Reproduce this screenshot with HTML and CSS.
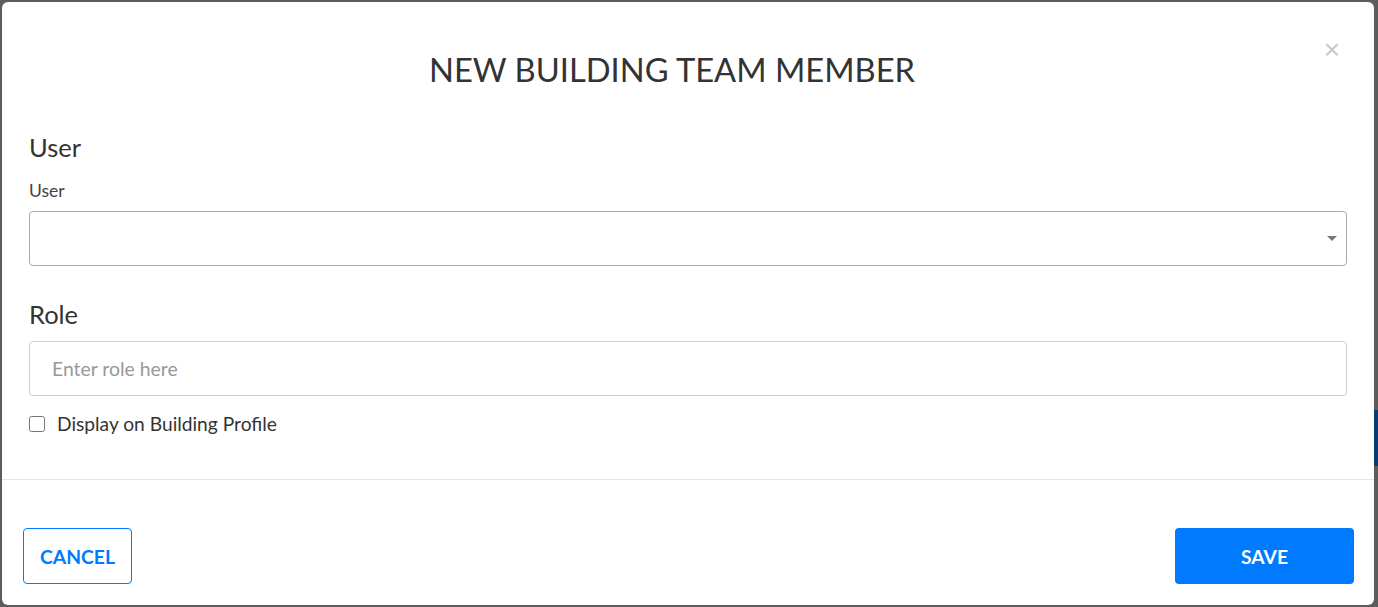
FILE: index.html
```html
<!DOCTYPE html>
<html lang="en">
  <head>
    <meta charset="UTF-8" />
    <meta name="viewport" content="width=device-width, initial-scale=1.0" />
    <title>New Building Team Member</title>
    <link rel="stylesheet" href="styles.css">
  </head>
  <body>
    <div class="backdrop">
      <div class="modal">
        <div class="modal-header">
          <h1 class="modal-title">NEW BUILDING TEAM MEMBER</h1>
          <button class="close" type="button" aria-label="Close">&times;</button>
        </div>

        <form class="modal-body">
          <h2 class="section-title">User</h2>
          <label class="field-label" for="user">User</label>
          <div class="select-wrap">
            <select id="user" name="user"></select>
            <span class="caret"></span>
          </div>

          <h2 class="section-title role-title">Role</h2>
          <input class="text-input" type="text" id="role" name="role" placeholder="Enter role here" />

          <label class="check-row">
            <input type="checkbox" id="displayProfile" name="displayProfile" />
            <span>Display on Building Profile</span>
          </label>
        </form>

        <div class="modal-footer">
          <button type="button" class="btn btn-outline">CANCEL</button>
          <button type="button" class="btn btn-primary">SAVE</button>
        </div>
      </div>
      <div class="side-strip"></div>
    </div>
  </body>
</html>
```

FILE: styles.css
```css
html,
body {
  margin: 0;
  height: 100%;
}

body {
  background-color: #5c5c5c;
  font-family: Lato, "Open Sans", Arial, sans-serif;
  color: #333;
}

.backdrop {
  display: flex;
  padding: 2px 0 0 2px;
  box-sizing: border-box;
  height: 100%;
}

.modal {
  width: 1372px;
  height: 603px;
  background-color: #fff;
  border-radius: 6px;
  display: flex;
  flex-direction: column;
  flex-shrink: 0;
}

.side-strip {
  width: 4px;
  height: 56px;
  margin-top: 408px;
  background-color: #0b3b74;
}

.modal-header {
  position: relative;
  padding: 48px 32px 0 0;
  text-align: center;
}

.modal-title {
  margin: 0;
  font-size: 32.7px;
  font-weight: 400;
  line-height: 1.2;
  color: #333;
}

.close {
  position: absolute;
  top: 34px;
  right: 34px;
  border: none;
  background: transparent;
  color: #c8c8c8;
  font-family: Arial, sans-serif;
  font-size: 28px;
  line-height: 1;
  padding: 0;
  cursor: pointer;
}

.modal-body {
  padding: 0 27px;
  display: flex;
  flex-direction: column;
  border-bottom: 1px solid #e5e5e5;
  padding-bottom: 44px;
}

.section-title {
  margin: 43px 0 0;
  font-size: 25.5px;
  font-weight: 400;
  line-height: 1.2;
  color: #333;
}

.role-title {
  margin-top: 33px;
}

.field-label {
  margin-top: 17px;
  font-size: 17.5px;
  line-height: 1.2;
  color: #444;
}

.select-wrap {
  position: relative;
  margin-top: 10px;
}

.select-wrap select {
  width: 100%;
  height: 55px;
  box-sizing: border-box;
  border: 1px solid #a9a9a9;
  border-radius: 4px;
  background: #fff;
  appearance: none;
  -webkit-appearance: none;
}

.caret {
  position: absolute;
  right: 10px;
  top: 25px;
  width: 0;
  height: 0;
  border-left: 5px solid transparent;
  border-right: 5px solid transparent;
  border-top: 5px solid #777;
}

.text-input {
  margin-top: 12px;
  width: 100%;
  height: 55px;
  box-sizing: border-box;
  border: 1px solid #cfcfcf;
  border-radius: 4px;
  padding: 0 22px;
  font-family: inherit;
  font-size: 19.4px;
  color: #333;
}

.text-input::placeholder {
  color: #999;
}

.check-row {
  display: flex;
  align-items: center;
  gap: 12px;
  margin-top: 16px;
  font-size: 19.2px;
  line-height: 1.2;
  color: #333;
}

.check-row input {
  width: 16px;
  height: 16px;
  margin: 0;
}

.modal-footer {
  display: flex;
  justify-content: space-between;
  padding: 48px 20px 0 21px;
}

.btn {
  height: 56px;
  border-radius: 4px;
  font-family: inherit;
  font-size: 19.3px;
  font-weight: 700;
  cursor: pointer;
}

.btn-outline {
  width: 109px;
  background: #fff;
  border: 1px solid #007bff;
  color: #007bff;
}

.btn-primary {
  width: 179px;
  background: #007bff;
  border: none;
  color: #fff;
}
```
